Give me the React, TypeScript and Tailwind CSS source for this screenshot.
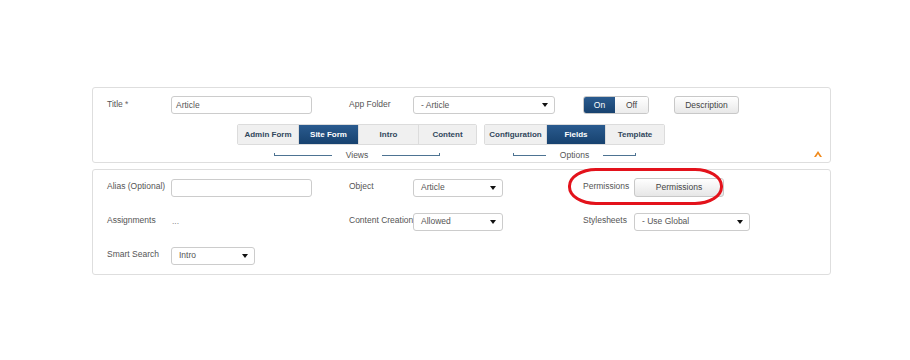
import React from 'react';

const FONT = { fontFamily: '"Liberation Sans", Arial, sans-serif' };

function Caret() {
  return (
    <svg width="6" height="4" viewBox="0 0 6 4" className="ml-auto">
      <path d="M0 0 L6 0 L3 4 Z" fill="#111" />
    </svg>
  );
}

function Select({ value, width }: { value: string; width: string }) {
  return (
    <div className={`${width} h-[18px] flex items-center border border-[#ccc] rounded-[3px] bg-white pl-[7px] pr-[6px] text-[8.5px] text-[#555]`}>
      <span>{value}</span>
      <Caret />
    </div>
  );
}

function Input({ value = '', width }: { value?: string; width: string }) {
  return (
    <div className={`${width} h-[18px] flex items-center border border-[#ccc] rounded-[3px] bg-white pl-[4px] text-[8.5px] text-[#555]`}>
      {value}
    </div>
  );
}

function Tabs({ items, active }: { items: { label: string; w: string }[]; active: string }) {
  return (
    <div className="flex h-[21px] border border-[#dcdcdc] rounded-[2px] overflow-hidden">
      {items.map((t, i) => (
        <div
          key={t.label}
          className={`${t.w} flex items-center justify-center text-[8px] font-bold ${
            t.label === active
              ? 'bg-gradient-to-b from-[#2a5b8f] to-[#17426f] text-white'
              : 'bg-[#f0f0f0] text-[#30475c]'
          } ${i > 0 ? 'border-l border-[#dcdcdc]' : ''}`}
        >
          {t.label}
        </div>
      ))}
    </div>
  );
}

function GroupLabel({ text, line }: { text: string; line: string }) {
  return (
    <div className="flex items-center justify-center text-[8.5px] text-[#555]">
      <div className={`${line} h-[3px] border-b border-l border-[#4d7392] mb-[1px]`} />
      <span className="mx-[14px]">{text}</span>
      <div className={`${line} h-[3px] border-b border-r border-[#4d7392] mb-[1px]`} />
    </div>
  );
}

export default function App() {
  return (
    <div className="w-[910px] h-[360px] bg-white" style={FONT}>
      <div className="pt-[87px] pl-[92px] text-[#555]">
        {/* Top panel */}
        <div className="w-[739px] h-[76px] border border-[#dedede] rounded-[3px] pl-[14px] pt-[8px] relative">
          <div className="flex items-center h-[18px] text-[8.5px]">
            <div className="w-[64px] -mt-[2px]">
              Title <span className="text-[#666]">*</span>
            </div>
            <Input value="Article" width="w-[141px]" />
            <div className="w-[64px] ml-[37px] -mt-[2px]">App Folder</div>
            <Select value="- Article" width="w-[142px]" />
            <div className="flex ml-[28px] h-[18px] border border-[#c8c8c8] rounded-[3px] overflow-hidden">
              <div className="w-[31px] flex items-center justify-center bg-gradient-to-b from-[#2a5b8f] to-[#17426f] text-white">On</div>
              <div className="w-[33px] flex items-center justify-center bg-gradient-to-b from-white to-[#ececec] text-[#444]">Off</div>
            </div>
            <div className="ml-[25px] w-[65px] h-[18px] flex items-center justify-center border border-[#c8c8c8] rounded-[3px] bg-gradient-to-b from-white to-[#e8e8e8] text-[#444]">
              Description
            </div>
          </div>

          <div className="flex ml-[130px] mt-[10px] gap-[7px]">
            <div className="flex flex-col">
              <Tabs
                active="Site Form"
                items={[
                  { label: 'Admin Form', w: 'w-[60px]' },
                  { label: 'Site Form', w: 'w-[60px]' },
                  { label: 'Intro', w: 'w-[60px]' },
                  { label: 'Content', w: 'w-[58px]' },
                ]}
              />
              <div className="mt-[4px]">
                <GroupLabel text="Views" line="w-[58px]" />
              </div>
            </div>
            <div className="flex flex-col">
              <Tabs
                active="Fields"
                items={[
                  { label: 'Configuration', w: 'w-[61px]' },
                  { label: 'Fields', w: 'w-[59px]' },
                  { label: 'Template', w: 'w-[59px]' },
                ]}
              />
              <div className="mt-[4px]">
                <GroupLabel text="Options" line="w-[33px]" />
              </div>
            </div>
          </div>

          <svg width="8" height="6" viewBox="0 0 8 6" className="absolute right-[8px] bottom-[5px]">
            <path d="M0 6 L4 0 L8 6 L6 6 L4 3 L2 6 Z" fill="#f08a1c" />
          </svg>
        </div>

        {/* Bottom panel */}
        <div className="w-[739px] h-[106px] mt-[6px] border border-[#dedede] rounded-[3px] pl-[14px] pt-[8px] text-[8.5px]">
          <div className="grid grid-cols-[64px_178px_64px_170px_51px_1fr] auto-rows-[19px] gap-y-[15px] items-center whitespace-nowrap">
            <div className="-mt-[2px]">Alias (Optional)</div>
            <div><Input width="w-[141px]" /></div>
            <div className="-mt-[2px]">Object</div>
            <div><Select value="Article" width="w-[90px]" /></div>
            <div className="-mt-[2px] relative">
              Permissions
              <div className="absolute -left-[15px] -top-[12px] w-[155px] h-[37px] border-[3px] border-[#e3121b] rounded-[28px/18px]" />
            </div>
            <div>
              <div className="w-[90px] h-[19px] flex items-center justify-center border border-[#c8c8c8] rounded-[3px] bg-gradient-to-b from-white to-[#e6e6e6] text-[#444]">
                Permissions
              </div>
            </div>

            <div className="-mt-[2px]">Assignments</div>
            <div className="text-[#888] pl-[1px]">...</div>
            <div className="-mt-[2px]">Content Creation</div>
            <div><Select value="Allowed" width="w-[90px]" /></div>
            <div className="-mt-[2px]">Stylesheets</div>
            <div><Select value="- Use Global" width="w-[116px]" /></div>

            <div className="-mt-[2px]">Smart Search</div>
            <div><Select value="Intro" width="w-[84px]" /></div>
          </div>
        </div>
      </div>
    </div>
  );
}
